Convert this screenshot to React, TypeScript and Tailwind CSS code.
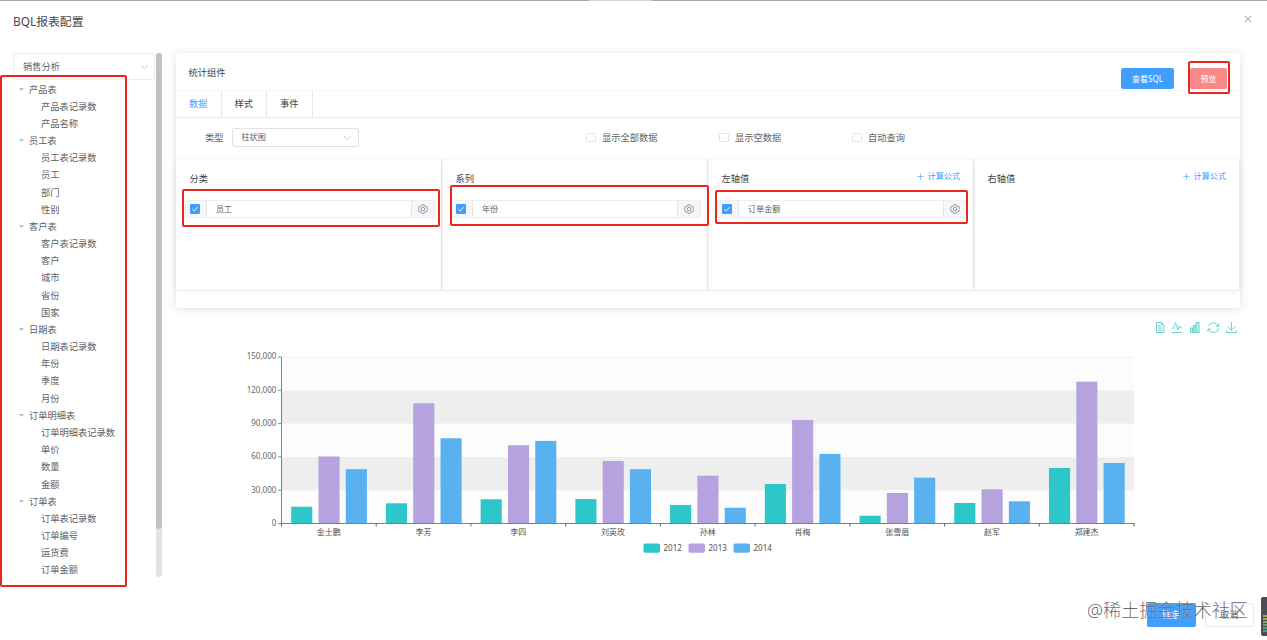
import React from "react";

const tree: { name: string; fields: string[] }[] = [
  { name: "产品表", fields: ["产品表记录数", "产品名称"] },
  { name: "员工表", fields: ["员工表记录数", "员工", "部门", "性别"] },
  { name: "客户表", fields: ["客户表记录数", "客户", "城市", "省份", "国家"] },
  { name: "日期表", fields: ["日期表记录数", "年份", "季度", "月份"] },
  { name: "订单明细表", fields: ["订单明细表记录数", "单价", "数量", "金额"] },
  { name: "订单表", fields: ["订单表记录数", "订单编号", "运货费", "订单金额"] },
];

const employees = ["金士鹏", "李芳", "李四", "刘英玫", "孙林", "肖梅", "张雪眉", "赵军", "郑建杰"];

const series = [
  { year: "2012", color: "#2ec7c9", values: [15100, 18200, 21800, 22000, 16700, 35600, 7000, 18500, 50000] },
  { year: "2013", color: "#b6a2de", values: [60400, 108300, 70500, 56300, 43100, 93300, 27500, 30800, 127800] },
  { year: "2014", color: "#5ab1ef", values: [48900, 76800, 74400, 48900, 14200, 62700, 41300, 20000, 54500] },
];

function Chevron() {
  return (
    <svg width="9" height="6" viewBox="0 0 9 6" fill="none" stroke="#c0c4cc" strokeWidth="0.9">
      <path d="M1 1L4.5 4.6L8 1" />
    </svg>
  );
}

function Checked() {
  return (
    <span className="flex h-[10px] w-[10px] items-center justify-center rounded-[1px] bg-[#409eff]">
      <svg width="8" height="8" viewBox="0 0 8 8" fill="none" stroke="#fff" strokeWidth="0.9">
        <path d="M1.3 4.2L3.2 5.9L6.7 2.1" />
      </svg>
    </span>
  );
}

function Gear() {
  return (
    <svg width="10" height="10" viewBox="0 0 10 10" fill="none" stroke="#85888e" strokeWidth="0.9">
      <path d="M3.7 0.9H6.3L6.8 2.1L7.5 2.5L8.7 2.3L9.5 4.3L8.8 5L9.5 5.7L8.7 7.7L7.5 7.5L6.8 7.9L6.3 9.1H3.7L3.2 7.9L2.5 7.5L1.3 7.7L0.5 5.7L1.2 5L0.5 4.3L1.3 2.3L2.5 2.5L3.2 2.1Z" />
      <circle cx="5" cy="5" r="1.7" />
    </svg>
  );
}

function Option({ label }: { label: string }) {
  return (
    <label className="flex w-[133px] items-center gap-[6.5px] text-[#606266]">
      <span className="h-[9.5px] w-[9.5px] rounded-[1.5px] border border-[#e0e3e9] bg-white" />
      {label}
    </label>
  );
}

function DropColumn({ title, field, formula }: { title: string; field?: string; formula?: boolean }) {
  return (
    <section className="h-[131px] w-[266px] border-b border-[#f3f3f5]">
      <div className="h-full border-r border-[#e9eaec] shadow-[0_0_5px_rgba(0,0,0,0.07)]">
        <div className="flex h-[40px] items-center justify-between pr-[13px] pl-[13.5px]">
          <span className="pb-[3px] text-[#404245]">{title}</span>
          {formula && (
            <span className="flex items-center gap-[3.5px] pb-[8px] text-[8.1px] text-[#409eff]">
              <svg width="7" height="7" viewBox="0 0 7 7" stroke="#6cb2fb" strokeWidth="0.8">
                <path d="M3.5 0.3V6.7M0.3 3.5H6.7" />
              </svg>
              计算公式
            </span>
          )}
        </div>
        {field && (
          <div className="ml-[9px] flex h-[18px] w-[250px] rounded-[2px] border border-[#ebeef3] bg-[#f5f7fa]">
            <span className="flex w-[20px] items-center pl-[4px]">
              <Checked />
            </span>
            <span className="flex w-[206px] items-center border-x border-[#e1e4ea] bg-white pl-[9px] text-[8.1px] text-[#606266]">
              {field}
            </span>
            <span className="flex flex-1 items-center justify-center">
              <Gear />
            </span>
          </div>
        )}
      </div>
    </section>
  );
}

function Chart() {
  const left = 111.5;
  const base = 213.5;
  const step = 852.5 / 9;
  const unit = 166.5 / 150000;
  return (
    <svg width="1080" height="260" viewBox="0 0 1080 260" className="block font-['Noto_Sans','Noto_Sans_CJK_SC',sans-serif]">
      {[0, 1, 2, 3, 4].map((i) => (
        <rect key={i} x={left} y={base - (i + 1) * 33.3} width={852.5} height={33.3} fill={i % 2 ? "#eeeeee" : "#fcfcfc"} />
      ))}
      <path d={`M${left} 47H964`} stroke="#eeeeee" strokeWidth="0.8" />
      {series.map((s, k) =>
        s.values.map((v, i) => (
          <rect
            key={s.year + i}
            x={left + step * i + 9.7 + k * 27.3}
            y={base - v * unit}
            width={21.1}
            height={v * unit}
            fill={s.color}
          />
        ))
      )}
      <path d="M111.5 47V213.5" stroke="#2ba3ac" strokeWidth="1" />
      <path d="M111 213.5H964.5" stroke="#3794cc" strokeWidth="1" />
      {[0, 1, 2, 3, 4, 5].map((i) => (
        <g key={i}>
          <path d={`M108 ${base - i * 33.3}H111.5`} stroke="#2ba3ac" strokeWidth="0.9" />
          <text x="106.3" y={base - i * 33.3 + 2.3} textAnchor="end" fontSize="8" fill="#666">
            {(i * 30000).toLocaleString("en-US")}
          </text>
        </g>
      ))}
      {Array.from({ length: 10 }, (_, i) => (
        <path key={i} d={`M${left + step * i} 213.5v3`} stroke="#48606c" strokeWidth="0.9" />
      ))}
      {employees.map((name, i) => (
        <text key={name} x={left + step * (i + 0.5)} y="224.7" textAnchor="middle" fontSize="8" fill="#505050">
          {name}
        </text>
      ))}
      {series.map((s, i) => (
        <g key={s.year}>
          <rect x={473.5 + i * 45} y="233.5" width="16.5" height="9.3" rx="1.8" fill={s.color} />
          <text x={493.5 + i * 45} y="240.8" fontSize="8" fill="#505050">
            {s.year}
          </text>
        </g>
      ))}
      <g fill="none" stroke="#5fd3cc" strokeWidth="0.95">
        <path d="M986.5 12.5h5l2.5 2.5v7.5h-7.5zM991.5 12.5v2.5h2.5M988 16h3M988 18h4.5M988 20.2h4.5" />
        <path d="M1002 22.5h10M1001.6 18.2h2l2-5.7l2.2 7.5l1.4-4.2l1 1.8h1.8" />
        <path d="M1020.5 18h2v4.5h-2zM1023.2 15.5h2v7h-2zM1026 12.5h3v10h-3z" fill="#5fd3cc" fillOpacity="0.35" />
        <path d="M1038.5 16.2a5.1 5.1 0 0 1 9.6 0M1048.8 18.5a5.1 5.1 0 0 1-9.8 0.7M1048.7 13.3v3h-2.8M1038 22v-3h2.8" />
        <path d="M1061.4 12v8M1057.5 16.7l3.9 3.9l3.9-3.9M1056.5 20.5v2h9.8v-2" />
      </g>
    </svg>
  );
}

export default function App() {
  return (
    <div className="relative flex h-[640px] w-[1267px] flex-col overflow-hidden bg-white font-['Noto_Sans','Noto_Sans_CJK_SC',sans-serif] text-[9.25px] leading-none text-[#606266]">
      <header className="flex h-[35px] shrink-0 items-center justify-between border-t border-[#a8a8a8] pr-[15px] pl-[13px] pt-[7px]">
        <h1 className="text-[11.85px] text-[#45474b]">BQL报表配置</h1>
        <svg width="8" height="8" viewBox="0 0 8 8" stroke="#909399" strokeWidth="0.9" className="-mt-[5px]">
          <path d="M0.8 0.8L7.2 7.2M7.2 0.8L0.8 7.2" />
        </svg>
      </header>

      <div className="flex h-[555px] shrink-0 pt-[18px]">
        <aside className="flex w-[162px] shrink-0 pl-[13px]">
          <div className="w-[143px]">
            <div className="flex h-[27px] w-[142px] items-center justify-between rounded-[2px] border border-[#eceef2] pr-[5px] pl-[9px]">
              <span>销售分析</span>
              <Chevron />
            </div>
            <ul className="flex flex-col pt-[0.6px]">
              {tree.map((table) => (
                <li key={table.name}>
                  <div className="flex h-[17.18px] items-center pl-[6px]">
                    <svg width="5" height="3" viewBox="0 0 5 3" className="mr-[5px]">
                      <path d="M0 0H5L2.5 3Z" fill="#b9bdc5" />
                    </svg>
                    {table.name}
                  </div>
                  <ul>
                    {table.fields.map((f) => (
                      <li key={f} className="flex h-[17.18px] items-center pl-[28px]">
                        {f}
                      </li>
                    ))}
                  </ul>
                </li>
              ))}
            </ul>
          </div>
          <div className="h-[524px] w-[6px] rounded-full bg-[#e2e2e2]">
            <div className="h-[476px] rounded-full bg-[#c1c1c1]" />
          </div>
        </aside>

        <main className="flex flex-1 flex-col pl-[8px]">
          <div className="ml-[6px] h-[255px] w-[1064px] shrink-0 rounded-[2px] bg-white shadow-[0_1px_8px_rgba(0,0,0,0.13)]">
            <div className="flex h-[38px] items-start justify-between border-b border-[#f6f6f7] pl-[12.5px]">
              <h2 className="pt-[15px] text-[#404245]">统计组件</h2>
              <div className="mr-[13px] flex gap-[16px] pt-[15px] text-[8px] text-white">
                <button className="h-[21px] w-[53px] rounded-[2px] bg-[#409eff]">查看SQL</button>
                <button className="h-[21px] w-[37px] rounded-[2px] bg-[#f78989]">预览</button>
              </div>
            </div>
            <nav className="flex h-[27px] border-b border-[#e8eaee] text-[#404245]">
              <span className="flex w-[45.5px] items-center justify-center border-r border-[#e4e7ed] text-[#409eff]">数据</span>
              <span className="flex w-[45.5px] items-center justify-center border-r border-[#e4e7ed]">样式</span>
              <span className="flex w-[45.5px] items-center justify-center border-r border-[#e4e7ed]">事件</span>
            </nav>
            <div className="flex h-[41px] items-center pb-[2px] pl-[29px]">
              <span>类型</span>
              <div className="ml-[8px] flex h-[19px] w-[127px] items-center justify-between rounded-[2px] border border-[#dfe2e8] pr-[6px] pl-[9px] text-[8.1px]">
                柱状图
                <Chevron />
              </div>
              <div className="ml-[227.5px] flex">
                <Option label="显示全部数据" />
                <Option label="显示空数据" />
                <Option label="自动查询" />
              </div>
            </div>
            <div className="flex pt-px">
              <DropColumn title="分类" field="员工" />
              <DropColumn title="系列" field="年份" />
              <DropColumn title="左轴值" field="订单金额" formula />
              <DropColumn title="右轴值" formula />
            </div>
          </div>
          <div className="mt-[2px]">
            <Chart />
          </div>
        </main>
      </div>

      <footer className="flex justify-end gap-[9.5px] pt-[13px] pr-[13.5px] text-[9.25px]">
        <button className="h-[24px] w-[49px] rounded-[2px] bg-[#409eff] text-white">确定</button>
        <button className="h-[24px] w-[48.5px] rounded-[2px] border border-[#e6e8ec]">取消</button>
      </footer>

      <div className="absolute top-0 left-[589px] h-px w-[63px] bg-[#d5d5d5]" />
      <div className="absolute top-[75px] left-0 h-[512px] w-[127px] rounded-[2px] border-2 border-[#e8281e]" />
      <div className="absolute top-[189px] left-[182px] h-[38px] w-[258px] rounded-[2px] border-2 border-[#e8281e]" />
      <div className="absolute top-[185px] left-[450px] h-[41px] w-[259px] rounded-[2px] border-2 border-[#e8281e]" />
      <div className="absolute top-[190px] left-[715px] h-[34px] w-[253px] rounded-[2px] border-2 border-[#e8281e]" />
      <div className="absolute top-[61px] left-[1188px] h-[33px] w-[42px] rounded-[2px] border-2 border-[#e8281e]" />
      <div className="absolute top-[601px] left-[1087px] text-[18.1px] leading-[18px] font-light whitespace-nowrap text-[#505050]/85 [text-shadow:0_0_1px_rgba(255,255,255,0.7)]">
        @稀土掘金技术社区
      </div>
      <div className="absolute top-[597px] right-0 flex h-[39px] w-[6px] flex-col justify-end gap-[1px] rounded-l-[2px] bg-[#4b4e57] pb-[4px] pl-[2px]">
        <span className="h-[2px] bg-[#a3a854]" />
        <span className="h-[2px] bg-[#a3a854]" />
        <span className="h-[2px] bg-[#86a860]" />
        <span className="h-[2px] bg-[#6fa56d]" />
        <span className="h-[2px] bg-[#58a27b]" />
        <span className="h-[2px] bg-[#4f9e85]" />
      </div>
    </div>
  );
}
